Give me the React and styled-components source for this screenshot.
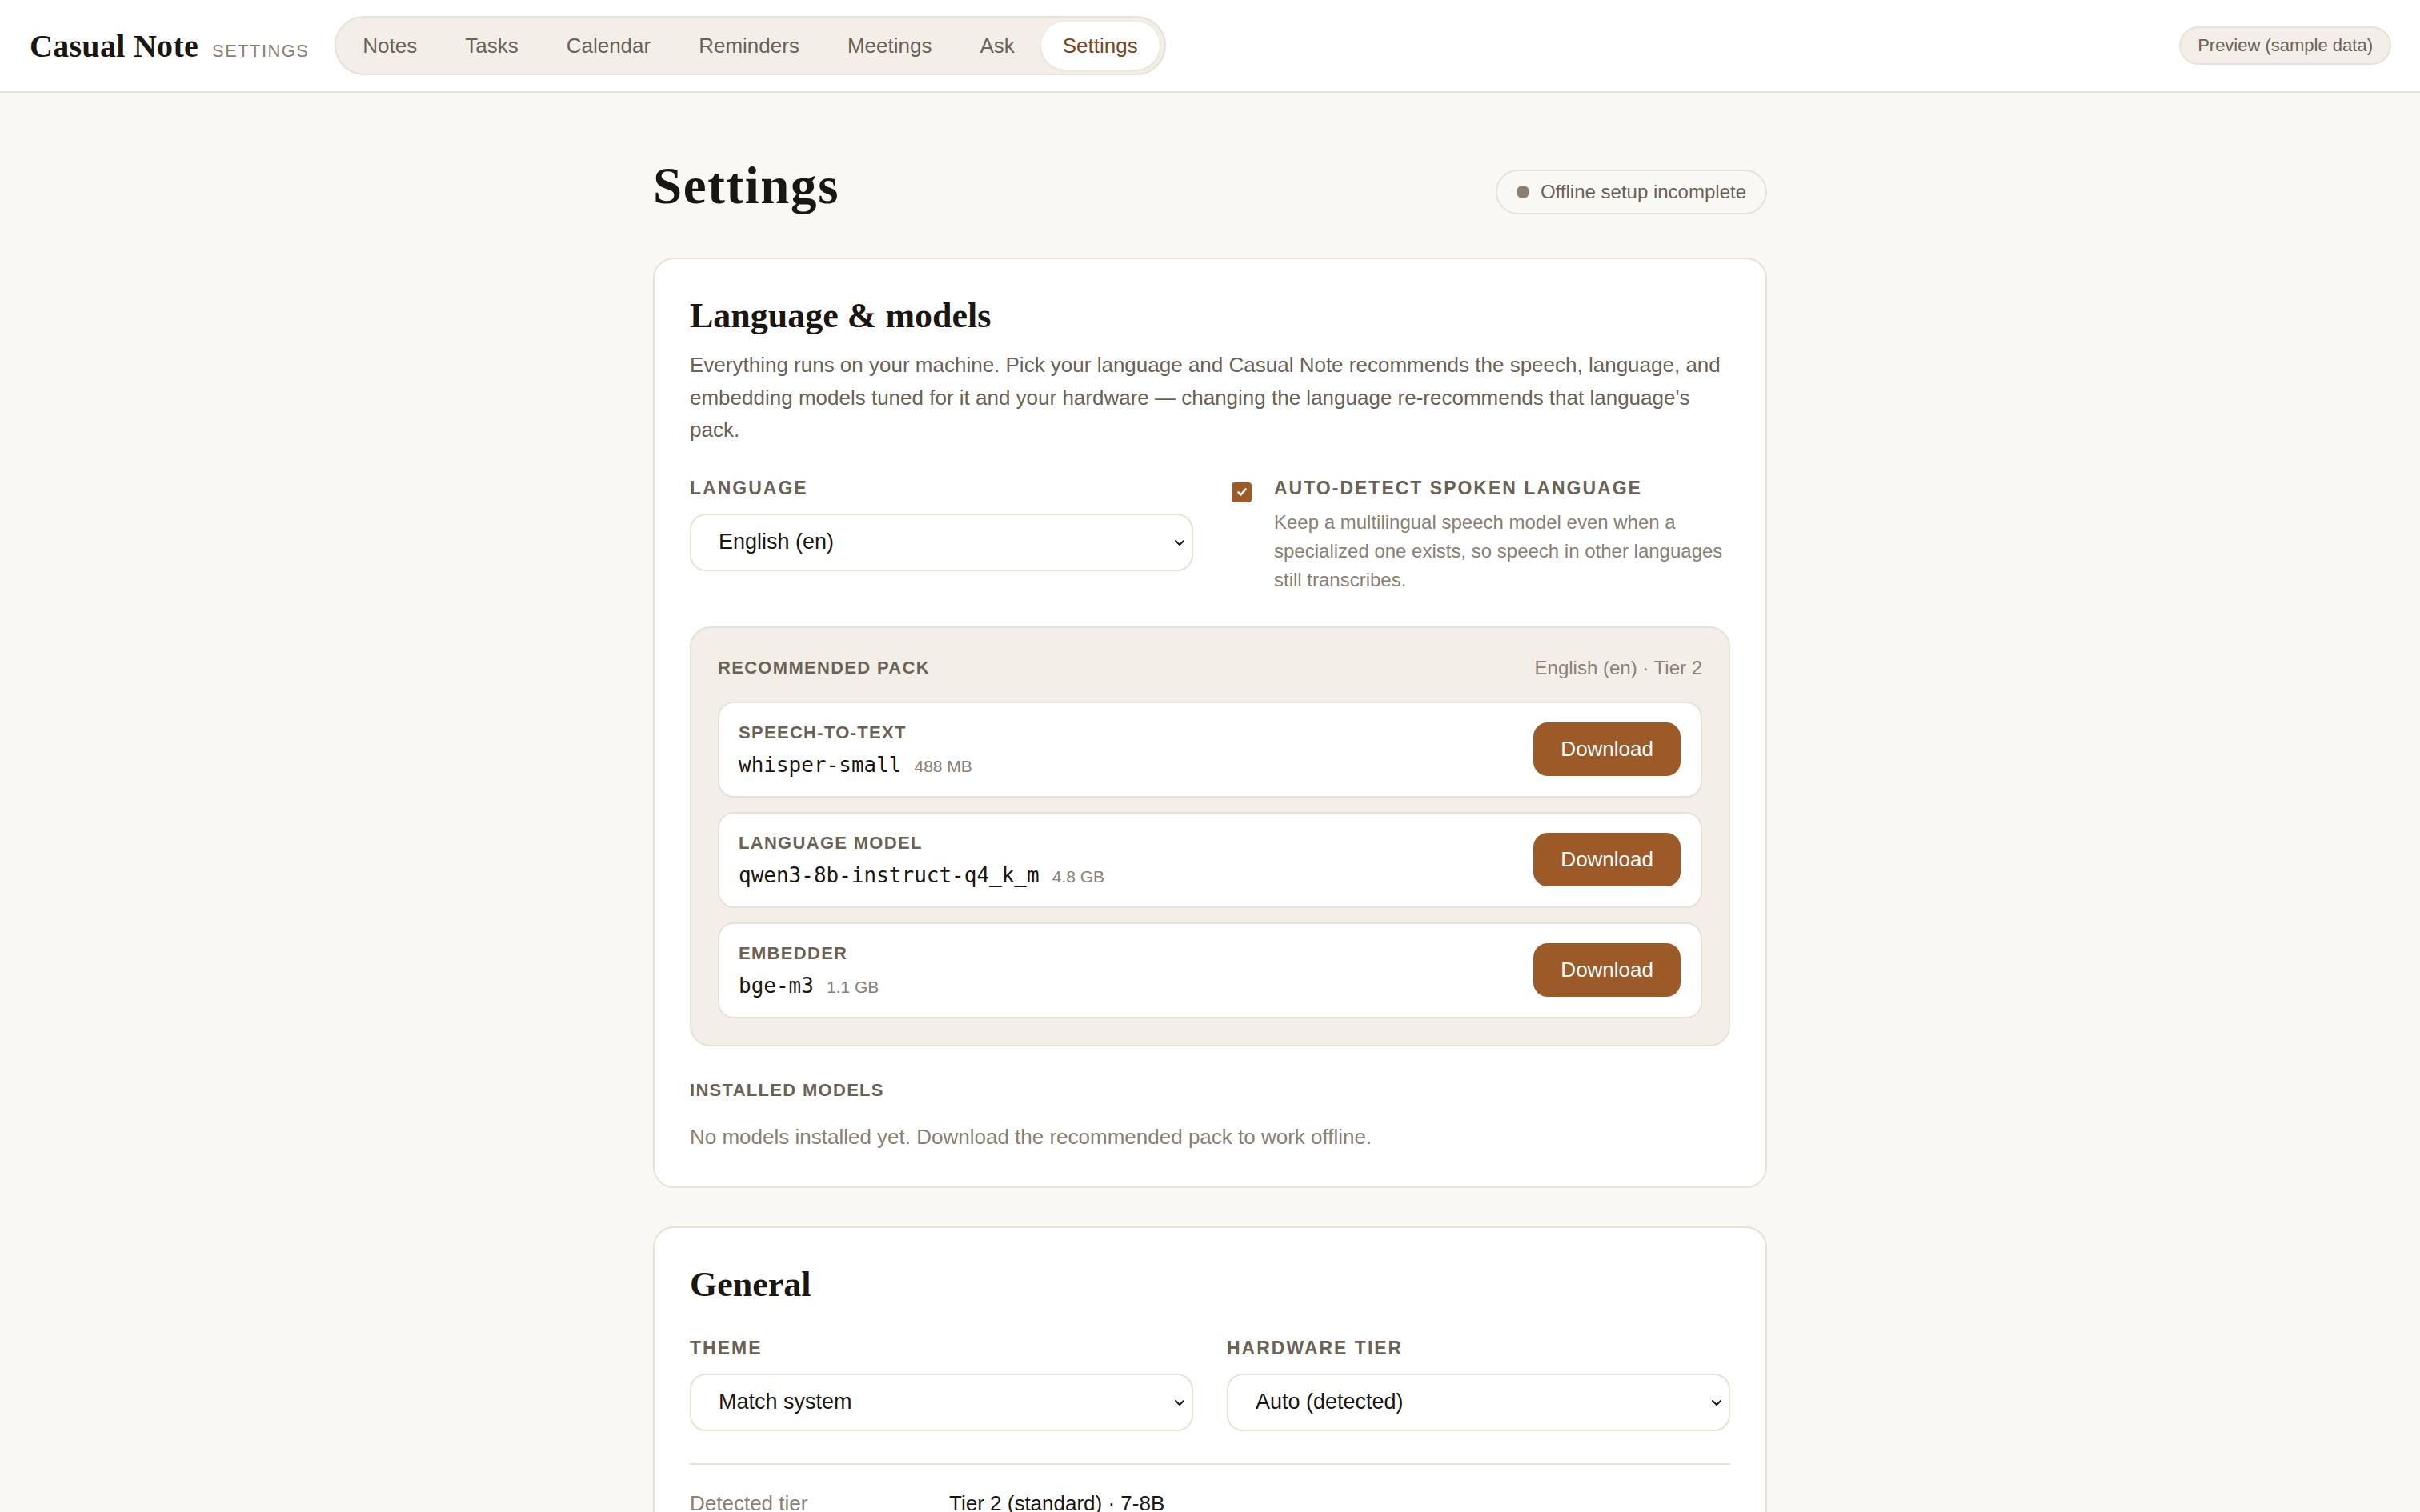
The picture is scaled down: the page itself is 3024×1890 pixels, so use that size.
import React from "react";
import styled, { createGlobalStyle } from "styled-components";

const C = {
  page: "#faf8f4",
  white: "#ffffff",
  soft: "#f3efe8",
  line: "#e8e1d6",
  ink: "#1a1612",
  muted: "#6b6256",
  faint: "#8a8073",
  brown: "#9b5a27",
};

const SANS = `"Liberation Sans", Arial, sans-serif`;
const SERIF = `"Liberation Serif", "Times New Roman", serif`;
const MONO = `"DejaVu Sans Mono", "Liberation Mono", monospace`;

const Global = createGlobalStyle`
  * { box-sizing: border-box; }
  html, body { margin: 0; padding: 0; background: ${C.page}; }
  body { font-family: ${SANS}; color: ${C.ink}; }
`;

const TopBar = styled.header`
  height: 116px;
  background: ${C.white};
  border-bottom: 2px solid ${C.line};
  display: flex;
  align-items: center;
  justify-content: space-between;
  padding: 0 36px 0 37px;
`;

const Brand = styled.div`
  display: flex;
  align-items: baseline;
  gap: 17px;
  margin-right: 32px;
`;

const Logo = styled.span`
  font-family: ${SERIF};
  font-weight: 700;
  font-size: 40px;
  letter-spacing: 0.3px;
  color: ${C.ink};
`;

const Section = styled.span`
  font-size: 22px;
  letter-spacing: 1.4px;
  color: ${C.faint};
`;

const Left = styled.div`
  display: flex;
  align-items: center;
`;

const Nav = styled.nav`
  display: flex;
  align-items: center;
  gap: 6px;
  height: 74px;
  padding: 0 6px;
  background: ${C.soft};
  border: 2px solid ${C.line};
  border-radius: 37px;
`;

const NavItem = styled.a`
  height: 60px;
  display: flex;
  align-items: center;
  padding: 0 27px;
  border-radius: 30px;
  font-size: 26px;
  color: ${(p) => (p.$active ? "#7d461d" : C.muted)};
  background: ${(p) => (p.$active ? C.white : "transparent")};
  box-shadow: ${(p) => (p.$active ? "0 1px 3px rgba(80,60,30,0.12)" : "none")};
  text-decoration: none;
`;

const PreviewPill = styled.span`
  height: 48px;
  display: flex;
  align-items: center;
  padding: 0 21px;
  border-radius: 24px;
  background: ${C.soft};
  border: 2px solid ${C.line};
  font-size: 22px;
  color: ${C.muted};
`;

const Main = styled.main`
  width: 1392px;
  margin: 0 auto;
  padding: 80px 0 120px;
`;

const TitleRow = styled.div`
  display: flex;
  align-items: flex-end;
  justify-content: space-between;
  margin-bottom: 54px;
`;

const Title = styled.h1`
  margin: 0;
  font-family: ${SERIF};
  font-weight: 700;
  font-size: 65px;
  line-height: 72px;
  letter-spacing: 1.6px;
  color: ${C.ink};
`;

const StatusBadge = styled.span`
  display: flex;
  align-items: center;
  gap: 14px;
  height: 56px;
  padding: 0 24px;
  border: 2px solid ${C.line};
  border-radius: 28px;
  font-size: 24px;
  color: ${C.muted};
`;

const Dot = styled.span`
  width: 16px;
  height: 16px;
  border-radius: 50%;
  background: #8a8070;
`;

const Card = styled.section`
  background: ${C.white};
  border: 2px solid ${C.line};
  border-radius: 26px;
  padding: 42px 44px 44px;
  & + & {
    margin-top: 48px;
  }
`;

const CardTitle = styled.h2`
  margin: 0;
  font-family: ${SERIF};
  font-weight: 700;
  font-size: 44px;
  line-height: 58px;
  color: ${C.ink};
`;

const Lead = styled.p`
  margin: 12px 0 0;
  font-size: 26px;
  line-height: 40.5px;
  color: ${C.muted};
`;

const FieldGrid = styled.div`
  display: grid;
  grid-template-columns: 1fr 1fr;
  column-gap: 42px;
  margin-top: ${(p) => p.$top}px;
`;

const Field = styled.div`
  display: flex;
  flex-direction: column;
  gap: 18px;
`;

const FieldLabel = styled.div`
  font-size: 23px;
  line-height: 28px;
  font-weight: 700;
  letter-spacing: 2px;
  text-transform: uppercase;
  color: ${C.muted};
`;

const SelectBox = styled.div`
  height: 72px;
  display: flex;
  align-items: center;
  justify-content: space-between;
  padding: 0 8px 0 34px;
  border: 2px solid ${C.line};
  border-radius: 20px;
  background: ${C.white};
  font-size: 27px;
  color: ${C.ink};
`;

const CheckField = styled.div`
  display: flex;
  gap: 28px;
  padding-left: 6px;
`;

const CheckBox = styled.span`
  flex: none;
  width: 25px;
  height: 25px;
  margin-top: 7px;
  border-radius: 4px;
  background: ${C.brown};
  display: flex;
  align-items: center;
  justify-content: center;
`;

const CheckText = styled.div`
  display: flex;
  flex-direction: column;
  gap: 11px;
`;

const Hint = styled.div`
  font-size: 24px;
  line-height: 36px;
  color: ${C.faint};
`;

const Pack = styled.div`
  margin-top: 40px;
  background: ${C.soft};
  border: 2px solid ${C.line};
  border-radius: 26px;
  padding: 32px 33px 33px;
  display: flex;
  flex-direction: column;
  gap: 18px;
`;

const PackHead = styled.div`
  display: flex;
  justify-content: space-between;
  align-items: center;
  height: 36px;
  margin-bottom: 6px;
`;

const SmallLabel = styled.div`
  font-size: 22px;
  line-height: 26px;
  font-weight: 700;
  letter-spacing: 1.3px;
  text-transform: uppercase;
  color: ${C.muted};
`;

const Meta = styled.span`
  font-size: 24px;
  color: ${C.faint};
`;

const ModelRow = styled.div`
  height: 120px;
  display: flex;
  align-items: center;
  justify-content: space-between;
  padding: 0 25px 0 24px;
  background: ${C.white};
  border: 2px solid ${C.line};
  border-radius: 20px;
`;

const ModelInfo = styled.div`
  display: flex;
  flex-direction: column;
  gap: 12px;
`;

const ModelName = styled.div`
  display: flex;
  align-items: baseline;
  gap: 16px;
`;

const Mono = styled.span`
  font-family: ${MONO};
  font-size: 26px;
  color: ${C.ink};
`;

const Size = styled.span`
  font-size: 21px;
  color: ${C.faint};
`;

const DownloadButton = styled.button`
  height: 67px;
  padding: 0 34px;
  border: none;
  border-radius: 18px;
  background: ${C.brown};
  color: ${C.white};
  font-family: ${SANS};
  font-size: 26px;
  cursor: pointer;
`;

const Installed = styled.div`
  margin-top: 42px;
  display: flex;
  flex-direction: column;
  gap: 27px;
`;

const Empty = styled.p`
  margin: 0;
  font-size: 26px;
  line-height: 36px;
  color: ${C.faint};
`;

const Divider = styled.hr`
  margin: 40px 0 0;
  border: none;
  border-top: 2px solid ${C.line};
`;

const InfoRow = styled.div`
  display: grid;
  grid-template-columns: 324px 1fr;
  margin-top: 30px;
  font-size: 26px;
  line-height: 36px;
`;

const InfoKey = styled.span`
  color: ${C.faint};
`;

const InfoVal = styled.span`
  color: ${C.ink};
`;

const Chevron = () => (
  <svg width="14" height="10" viewBox="0 0 14 10" fill="none">
    <path d="M2 3l5 5 5-5" stroke="#1a1612" strokeWidth="2" strokeLinecap="round" strokeLinejoin="round" />
  </svg>
);

const Check = () => (
  <svg width="16" height="16" viewBox="0 0 16 16" fill="none">
    <path d="M3.5 8.5l3 3 6-7" stroke="#fff" strokeWidth="2.6" strokeLinecap="round" strokeLinejoin="round" />
  </svg>
);

const Select = ({ value }) => (
  <SelectBox>
    <span>{value}</span>
    <Chevron />
  </SelectBox>
);

const navItems = ["Notes", "Tasks", "Calendar", "Reminders", "Meetings", "Ask", "Settings"];

const models = [
  { kind: "Speech-to-text", name: "whisper-small", size: "488 MB" },
  { kind: "Language model", name: "qwen3-8b-instruct-q4_k_m", size: "4.8 GB" },
  { kind: "Embedder", name: "bge-m3", size: "1.1 GB" },
];

export default function App() {
  return (
    <>
      <Global />
      <TopBar>
        <Left>
          <Brand>
            <Logo>Casual Note</Logo>
            <Section>SETTINGS</Section>
          </Brand>
          <Nav>
            {navItems.map((n) => (
              <NavItem key={n} $active={n === "Settings"}>
                {n}
              </NavItem>
            ))}
          </Nav>
        </Left>
        <PreviewPill>Preview (sample data)</PreviewPill>
      </TopBar>

      <Main>
        <TitleRow>
          <Title>Settings</Title>
          <StatusBadge>
            <Dot />
            Offline setup incomplete
          </StatusBadge>
        </TitleRow>

        <Card>
          <CardTitle>Language &amp; models</CardTitle>
          <Lead>
            Everything runs on your machine. Pick your language and Casual Note recommends the speech,
            language, and embedding models tuned for it and your hardware — changing the language
            re-recommends that language's pack.
          </Lead>

          <FieldGrid $top={38}>
            <Field>
              <FieldLabel>Language</FieldLabel>
              <Select value="English (en)" />
            </Field>
            <CheckField>
              <CheckBox>
                <Check />
              </CheckBox>
              <CheckText>
                <FieldLabel>Auto-detect spoken language</FieldLabel>
                <Hint>
                  Keep a multilingual speech model even when a specialized one exists, so speech in
                  other languages still transcribes.
                </Hint>
              </CheckText>
            </CheckField>
          </FieldGrid>

          <Pack>
            <PackHead>
              <SmallLabel>Recommended pack</SmallLabel>
              <Meta>English (en) · Tier 2</Meta>
            </PackHead>
            {models.map((m) => (
              <ModelRow key={m.name}>
                <ModelInfo>
                  <SmallLabel>{m.kind}</SmallLabel>
                  <ModelName>
                    <Mono>{m.name}</Mono>
                    <Size>{m.size}</Size>
                  </ModelName>
                </ModelInfo>
                <DownloadButton>Download</DownloadButton>
              </ModelRow>
            ))}
          </Pack>

          <Installed>
            <SmallLabel>Installed models</SmallLabel>
            <Empty>No models installed yet. Download the recommended pack to work offline.</Empty>
          </Installed>
        </Card>

        <Card>
          <CardTitle>General</CardTitle>
          <FieldGrid $top={36}>
            <Field>
              <FieldLabel>Theme</FieldLabel>
              <Select value="Match system" />
            </Field>
            <Field>
              <FieldLabel>Hardware tier</FieldLabel>
              <Select value="Auto (detected)" />
            </Field>
          </FieldGrid>
          <Divider />
          <InfoRow>
            <InfoKey>Detected tier</InfoKey>
            <InfoVal>Tier 2 (standard) · 7-8B</InfoVal>
          </InfoRow>
          <InfoRow>
            <InfoKey>Memory</InfoKey>
            <InfoVal>16 GB</InfoVal>
          </InfoRow>
        </Card>
      </Main>
    </>
  );
}
